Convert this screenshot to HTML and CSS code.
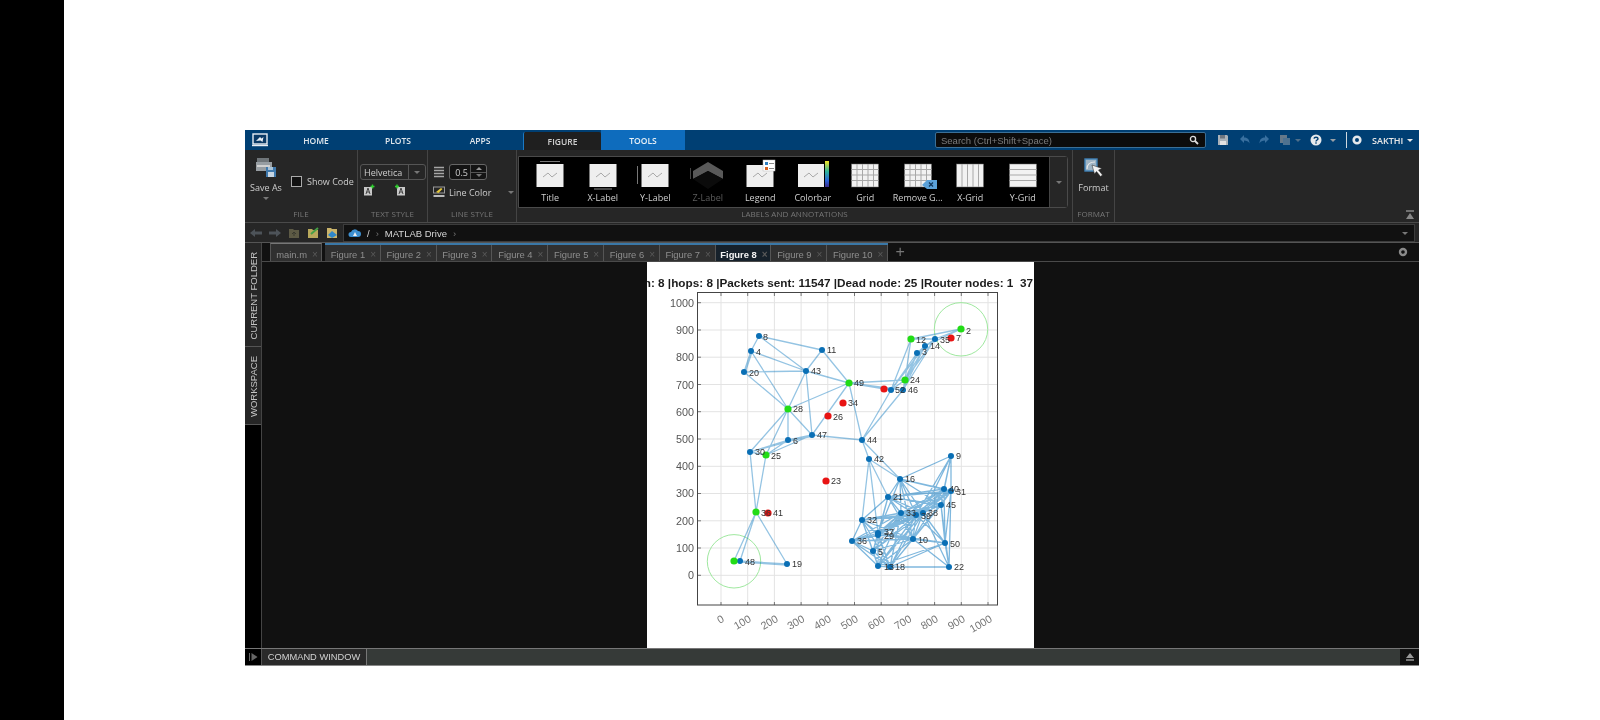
FILE: index.html
```html
<!DOCTYPE html>
<html lang="en">
<head>
<meta charset="utf-8">
<title>MATLAB Online</title>
<link rel="stylesheet" href="styles.css">
</head>
<body class="page">
<div class="blackbar"></div>
<main class="stage">
<div class="app">
  <header class="topbar">
    <div class="logo"><svg width="18" height="14" viewBox="0 0 18 14"><rect x="2" y="1" width="14" height="10" fill="#0b3a66" stroke="#e8eef4" stroke-width="1.4"/><path d="M1 12.5h16" stroke="#e8eef4" stroke-width="1.4"/><path d="M5 8l4-4 1.500 1.500 2-1.500-1 5-2-1.500z" fill="#e8eef4"/></svg></div>
    <div class="navtab">HOME</div>
    <div class="navtab">PLOTS</div>
    <div class="navtab">APPS</div>
    <div class="navtab navtab-figure">FIGURE</div>
    <div class="navtab navtab-tools">TOOLS</div>
    <div class="topfill"></div>
    <div class="search"><span>Search (Ctrl+Shift+Space)</span><svg width="10" height="10" viewBox="0 0 10 10"><circle cx="4" cy="4" r="2.600" fill="none" stroke="#ddd" stroke-width="1.300"/><path d="M6 6l3 3" stroke="#ddd" stroke-width="1.800"/></svg></div>
    <svg class="qa qa-save" width="12" height="12" viewBox="0 0 12 12"><path d="M1 1h9l1 1v9H1z" fill="#aab2b9"/><rect x="3" y="1" width="5" height="3.500" fill="#6d7680"/><rect x="3" y="7" width="6" height="4" fill="#e2e2e2"/></svg>
    <svg class="qa qa-undo" width="12" height="12" viewBox="0 0 12 12"><path d="M1 5l4-4v2.500c3 0 5.500 1.500 5.500 6-1-2.300-3-3-5.500-3V9z" fill="#39709f"/></svg>
    <svg class="qa qa-redo" width="12" height="12" viewBox="0 0 12 12"><path d="M11 5L7 1v2.500c-3 0-5.500 1.500-5.500 6 1-2.300 3-3 5.500-3V9z" fill="#39709f"/></svg>
    <svg class="qa qa-copy" width="12" height="12" viewBox="0 0 12 12"><rect x="1" y="1" width="7" height="8" fill="#66798a"/><rect x="4" y="4" width="7" height="7" fill="#4f7290"/></svg>
    <span class="caret caret-dim qa-c1"></span>
    <svg class="qa qa-help" width="12" height="12" viewBox="0 0 12 12"><circle cx="6" cy="6" r="5.500" fill="#e6e9ec"/><path d="M4 4.600C4.200 2.800 8 2.800 8 4.700 8 6 6 6 6 7.500" fill="none" stroke="#003f73" stroke-width="1.400"/><rect x="5.300" y="8.300" width="1.400" height="1.400" fill="#003f73"/></svg>
    <span class="caret qa-c2"></span>
    <span class="qa-div"></span>
    <svg class="qa qa-gear" width="12" height="12" viewBox="0 0 12 12"><circle cx="6" cy="6" r="3.300" fill="none" stroke="#e6e9ec" stroke-width="2.600"/></svg>
    <span class="username">SAKTHI</span>
    <span class="caret caret-bright qa-c3"></span>
  </header>

  <section class="ribbon">
    <div class="rgroup rg-file">
      <div class="rbody rbody-file">
        <div class="bigbtn">
          <svg width="22" height="22" viewBox="0 0 22 22"><rect x="2" y="1" width="12" height="7" fill="#6f7579"/><rect x="1" y="5" width="16" height="9" fill="#979da2"/><rect x="2" y="8" width="13" height="2" fill="#d0d0d0"/><path d="M11 10h10v10H11z" fill="#3f79ad"/><rect x="13" y="15" width="6" height="5" fill="#c7d6e3"/><rect x="13" y="10" width="5" height="3" fill="#a9c3d8"/></svg>
          <span>Save As</span>
          <span class="caret caret-dim"></span>
        </div>
        <div class="showcode"><span class="check"></span><span>Show Code</span></div>
      </div>
      <div class="rlabel">FILE</div>
    </div>
    <div class="rgroup rg-text">
      <div class="rbody rbody-col">
        <div class="combo"><span class="combo-text">Helvetica</span><span class="combo-btn"><span class="caret caret-dim"></span></span></div>
        <div class="fontbtns">
          <svg width="12" height="12" viewBox="0 0 12 12"><rect x="1" y="3" width="8" height="8.500" fill="#c8c8c8"/><path d="M3 10l2-6 2 6M3.700 8h2.600" fill="none" stroke="#444"/><path d="M9.500 0.500v4M7.500 2.500h4" stroke="#2fd02f" stroke-width="1.400"/></svg>
          <svg width="12" height="12" viewBox="0 0 12 12"><rect x="3" y="3" width="8" height="8.500" fill="#c8c8c8"/><path d="M5 10l2-6 2 6M5.700 8h2.600" fill="none" stroke="#444"/><path d="M3 0.500v4M1 2.500h4" stroke="#2fd02f" stroke-width="1.400"/></svg>
        </div>
      </div>
      <div class="rlabel">TEXT STYLE</div>
    </div>
    <div class="rgroup rg-line">
      <div class="rbody rbody-col">
        <div class="linerow">
          <svg width="12" height="12" viewBox="0 0 12 12"><path d="M1 1.500h10M1 4.500h10M1 7.500h10M1 10.500h10" stroke="#a6a6a6" stroke-width="1.700"/></svg>
          <div class="spinner"><span class="spin-val">0.5</span><span class="spin-btns"><span class="spin-up"></span><span class="spin-down"></span></span></div>
        </div>
        <div class="linerow linerow-color">
          <svg width="12" height="12" viewBox="0 0 12 12"><rect x=".5" y="1" width="11" height="6" fill="none" stroke="#999"/><path d="M3 6l5-4 1.500 1-4 4z" fill="#e6c93c"/><path d="M.5 10h11" stroke="#bbb" stroke-width="2"/></svg>
          <span class="linecolor">Line Color</span>
          <span class="caret caret-dim"></span>
        </div>
      </div>
      <div class="rlabel">LINE STYLE</div>
    </div>
    <div class="rgroup rg-labels">
      <div class="rbody rbody-gallery">
        <div class="gallery">
          <div class="gitem"><svg class="gicon" viewBox="0 0 44 30"><path d="M12 2.500h20" stroke="#777"/><rect x="8.500" y="5" width="27" height="23" fill="#efefef"/><path d="M15 18l5-4 4 4 5-4" fill="none" stroke="#a9a9a9"/></svg><span>Title</span></div>
          <div class="gitem"><svg class="gicon" viewBox="0 0 44 30"><rect x="8.500" y="5" width="27" height="23" fill="#efefef"/><path d="M15 18l5-4 4 4 5-4" fill="none" stroke="#a9a9a9"/><path d="M13 30h18" stroke="#888"/></svg><span>X-Label</span></div>
          <div class="gitem"><svg class="gicon" viewBox="0 0 44 30"><path d="M4.500 7v18" stroke="#777"/><rect x="8.500" y="5" width="27" height="23" fill="#efefef"/><path d="M15 18l5-4 4 4 5-4" fill="none" stroke="#a9a9a9"/></svg><span>Y-Label</span></div>
          <div class="gitem gitem-off"><svg class="gicon" viewBox="0 0 44 30"><path d="M4.500 9v11" stroke="#444"/><path d="M22 3l15 9v8l-15-8-15 8v-8z" fill="#595959"/><path d="M7 20l15 10 15-10-15-8z" fill="#0b0b0b"/></svg><span>Z-Label</span></div>
          <div class="gitem"><svg class="gicon" viewBox="0 0 44 30"><rect x="8.500" y="6" width="27" height="22" fill="#efefef"/><path d="M15 18l5-4 4 4 5-4" fill="none" stroke="#a9a9a9"/><rect x="25" y="1" width="12" height="11" fill="#fff" stroke="#bbb" stroke-width=".5"/><rect x="27" y="3" width="3" height="3" fill="#2f7fc1"/><rect x="27" y="8" width="3" height="3" fill="#d9601e"/><path d="M31 4.500h5M31 9.500h5" stroke="#888"/></svg><span>Legend</span></div>
          <div class="gitem"><svg class="gicon" viewBox="0 0 44 30"><defs><linearGradient id="cbar" x1="0" y1="0" x2="0" y2="1"><stop offset="0" stop-color="#f5e625"/><stop offset=".4" stop-color="#2fb59a"/><stop offset=".75" stop-color="#2a64d8"/><stop offset="1" stop-color="#3a2a8a"/></linearGradient></defs><rect x="7" y="5" width="26" height="23" fill="#efefef"/><path d="M13 18l5-4 4 4 5-4" fill="none" stroke="#a9a9a9"/><rect x="34" y="2" width="4" height="26" fill="url(#cbar)"/></svg><span>Colorbar</span></div>
          <div class="gitem"><svg class="gicon" viewBox="0 0 44 30"><rect x="8.500" y="5" width="27" height="23" fill="#f2f2f2" stroke="#666" stroke-width=".5"/><path d="M14 5v23M19.500 5v23M25 5v23M30.500 5v23M8.500 10.500h27M8.500 16h27M8.500 21.500h27" stroke="#a8a8a8"/></svg><span>Grid</span></div>
          <div class="gitem"><svg class="gicon" viewBox="0 0 44 30"><rect x="8.500" y="5" width="27" height="23" fill="#f2f2f2" stroke="#666" stroke-width=".5"/><path d="M14 5v23M19.500 5v23M25 5v23M30.500 5v23M8.500 10.500h27M8.500 16h27M8.500 21.500h27" stroke="#a8a8a8"/><path d="M26 26l5-5h10v9H31z" fill="#5ba1d8"/><path d="M33 23.500l4 4M37 23.500l-4 4" stroke="#12365a" stroke-width="1.200"/></svg><span>Remove G...</span></div>
          <div class="gitem"><svg class="gicon" viewBox="0 0 44 30"><rect x="8.500" y="5" width="27" height="23" fill="#f2f2f2" stroke="#666" stroke-width=".5"/><path d="M14 5v23M19.500 5v23M25 5v23M30.500 5v23" stroke="#a8a8a8"/></svg><span>X-Grid</span></div>
          <div class="gitem"><svg class="gicon" viewBox="0 0 44 30"><rect x="8.500" y="5" width="27" height="23" fill="#f2f2f2" stroke="#666" stroke-width=".5"/><path d="M8.500 10.500h27M8.500 16h27M8.500 21.500h27" stroke="#a8a8a8"/></svg><span>Y-Grid</span></div>
          <div class="gmore"><span class="caret caret-dim"></span></div>
        </div>
      </div>
      <div class="rlabel">LABELS AND ANNOTATIONS</div>
    </div>
    <div class="rgroup rg-format">
      <div class="rbody rbody-format">
        <svg width="20" height="20" viewBox="0 0 20 20"><rect x="1" y="1" width="12" height="12" fill="#9fb4c4" stroke="#3f82b8" stroke-width="1.400"/><path d="M3 11c0-5 3-7 8-7" fill="none" stroke="#e8e8e8" stroke-width="1.200"/><path d="M8 7l10 3.500-3.500 1.500 4 5-2 1.500-4-5-2 2.500z" fill="#f2f2f2" stroke="#222" stroke-width=".5"/></svg>
        <span>Format</span>
      </div>
      <div class="rlabel">FORMAT</div>
    </div>
    <div class="rfill"><svg width="10" height="10" viewBox="0 0 10 10"><path d="M1 1h8" stroke="#888" stroke-width="1.500"/><path d="M5 3l4 6H1z" fill="#888"/></svg></div>
  </section>

  <nav class="addr">
    <div class="addr-icons">
      <svg width="12" height="10" viewBox="0 0 12 10"><path d="M0 5l5-4v2.500h7v3H5V9z" fill="#4d5359"/></svg>
      <svg width="12" height="10" viewBox="0 0 12 10"><path d="M12 5L7 1v2.500H0v3h7V9z" fill="#4d5359"/></svg>
      <svg width="12" height="10" viewBox="0 0 12 10"><path d="M1 1h4l1 1h5v8H1z" fill="#5d5a45"/><path d="M6 8V4M4 6l2-2 2 2" stroke="#3a3a30" fill="none"/></svg>
      <svg width="12" height="12" viewBox="0 0 12 12"><path d="M1 2h4l1 1h5v8H1z" fill="#b9a95c"/><path d="M4 7l7-6" stroke="#46a046" stroke-width="2"/></svg>
      <svg width="12" height="12" viewBox="0 0 12 12"><path d="M1 1h4l1 1h5v9H1z" fill="#c9b36a"/><path d="M6 4L2 8l4 3 5-3z" fill="#2f86c9"/></svg>
    </div>
    <div class="addr-input">
      <svg width="13" height="9" viewBox="0 0 13 9"><path d="M3 8a2.500 2.500 0 0 1 0-5 4 4 0 0 1 7-1 3 3 0 0 1 0 6z" fill="#3d8fd0"/><path d="M5 7l2-4 2 4z" fill="#f0f0f0"/></svg>
      <span class="crumb-slash">/</span><span class="crumb-sep">›</span><span class="crumb">MATLAB Drive</span><span class="crumb-sep">›</span>
      <span class="addr-fill"></span><span class="caret caret-dim"></span>
    </div>
  </nav>

  <div class="body">
    <aside class="rail">
      <div class="vtab vtab-folder"><span>CURRENT FOLDER</span></div>
      <div class="vtab vtab-work"><span>WORKSPACE</span></div>
    </aside>
    <div class="docs">
      <div class="tabs">
        <div class="grip"></div>
        <div class="tab tab-main">main.m<i>×</i></div>
        <div class="figtabs">
          <div class="tab">Figure 1<i>×</i></div>
          <div class="tab">Figure 2<i>×</i></div>
          <div class="tab">Figure 3<i>×</i></div>
          <div class="tab">Figure 4<i>×</i></div>
          <div class="tab">Figure 5<i>×</i></div>
          <div class="tab">Figure 6<i>×</i></div>
          <div class="tab">Figure 7<i>×</i></div>
          <div class="tab tab-active">Figure 8<i>×</i></div>
          <div class="tab">Figure 9<i>×</i></div>
          <div class="tab tab-wide">Figure 10<i>×</i></div>
        </div>
        <div class="tabplus">+</div>
        <div class="tabsfill"></div>
        <svg width="10" height="10" viewBox="0 0 10 10"><circle cx="5" cy="5" r="3" fill="none" stroke="#8a8a8a" stroke-width="2.400"/></svg>
      </div>
      <div class="figarea">
        <svg class="plot" width="387" height="386" viewBox="647 262 387 386">
          <rect x="647" y="262" width="387" height="386" fill="#fff"/>
          <path class="grid" d="M721 292.500V605M747.700 292.500V605M774.400 292.500V605M801.100 292.500V605M827.800 292.500V605M854.500 292.500V605M881.200 292.500V605M907.900 292.500V605M934.600 292.500V605M961.300 292.500V605M988 292.500V605M697 575.300H997M697 548H997M697 520.800H997M697 493.500H997M697 466.300H997M697 439H997M697 411.700H997M697 384.500H997M697 357.200H997M697 330H997M697 302.700H997"/>
          <rect class="axes" x="697.500" y="292.500" width="300" height="312.500"/>
          <path class="axes-t" d="M721 605v-3M747.700 605v-3M774.400 605v-3M801.100 605v-3M827.800 605v-3M854.500 605v-3M881.200 605v-3M907.900 605v-3M934.600 605v-3M961.300 605v-3M988 605v-3M721 293v3M747.700 293v3M774.400 293v3M801.100 293v3M827.800 293v3M854.500 293v3M881.200 293v3M907.900 293v3M934.600 293v3M961.300 293v3M988 293v3M698 575.300h3M698 548h3M698 520.800h3M698 493.500h3M698 466.300h3M698 439h3M698 411.700h3M698 384.500h3M698 357.200h3M698 330h3M698 302.700h3"/>
          <text class="title" x="1033" y="287" text-anchor="end">n: 8 |hops: 8 |Packets sent: 11547 |Dead node: 25 |Router nodes: 1  37</text>
          <g class="ylab">
            <text x="694" y="579">0</text><text x="694" y="552">100</text><text x="694" y="525">200</text><text x="694" y="497">300</text><text x="694" y="470">400</text><text x="694" y="443">500</text><text x="694" y="416">600</text><text x="694" y="388.500">700</text><text x="694" y="361">800</text><text x="694" y="334">900</text><text x="694" y="307">1000</text>
          </g>
          <g class="xlab">
            <text transform="translate(725 621) rotate(-30)">0</text><text transform="translate(752 621) rotate(-30)">100</text><text transform="translate(779 621) rotate(-30)">200</text><text transform="translate(805.500 621) rotate(-30)">300</text><text transform="translate(832 621) rotate(-30)">400</text><text transform="translate(859 621) rotate(-30)">500</text><text transform="translate(886 621) rotate(-30)">600</text><text transform="translate(912.500 621) rotate(-30)">700</text><text transform="translate(939 621) rotate(-30)">800</text><text transform="translate(966 621) rotate(-30)">900</text><text transform="translate(993 621) rotate(-30)">1000</text>
          </g>
          <circle class="range" cx="961" cy="329.300" r="26.700"/>
          <circle class="range" cx="734" cy="561.300" r="26.700"/>
          <path class="edges" d="M759 336L751 351M759 336L806 371M759 336L822 350M751 351L744 372M752 352L745 373M751 351L806 371M751 351L788 409M744 372L806 371M744 372L788 409M822 350L806 371M822 350L849 383M806 371L849 383M806 371L788 409M806 371L812 435M788 409L849 383M788 409L812 435M788 409L788 440M788 409L750 452M788 409L766 455M788 440L812 435M789 441L813 436M788 440L750 452M788 440L766 455M812 435L766 455M812 435L750 452M812 435L862 440M812 435L849 383M750 452L766 455M750 452L756 512M766 455L756 512M756 512L734 561M756 512L740 561M756 512L787 564M740 561L787 564M740 562L787 565M734 561L740 561M849 383L862 440M849 383L905 380M849 383L891 390M849 383L903 390M862 440L869 459M862 440L891 390M862 440L903 390M905 380L911 339M905 380L917 353M905 380L925 346M905 380L935 339M903 390L905 380M891 390L905 380M891 390L911 339M891 390L917 353M891 390L925 346M903 390L917 353M903 390L925 346M903 390L935 339M911 339L961 329M911 339L935 339M935 339L961 329M925 346L961 329M917 353L935 339M917 353L925 346M925 346L935 339M869 459L900 479M862 440L900 479M869 459L888 497M869 459L862 520M869 459L878 533"/>
          <path class="edges edges-dense" d="M900 479L951 456M900 479L944 489M900 479L951 491M900 479L941 505M900 479L888 497M900 479L901 513M900 479L916 515M900 479L923 513M900 479L878 533M900 479L913 539M951 456L944 489M951 456L951 491M951 456L941 505M951 456L923 513M951 456L916 515M944 489L951 491M944 489L941 505M944 489L888 497M944 489L901 513M944 489L916 515M944 489L923 513M944 489L878 533M944 489L913 539M944 489L945 543M944 489L878 535M951 491L941 505M951 491L888 497M951 491L901 513M951 491L916 515M951 491L923 513M951 491L913 539M951 491L945 543M951 491L949 567M951 491L878 535M941 505L901 513M941 505L916 515M941 505L923 513M941 505L913 539M941 505L945 543M941 505L949 567M941 505L888 497M888 497L901 513M888 497L916 515M888 497L923 513M888 497L862 520M888 497L878 533M888 497L878 535M888 497L913 539M888 497L873 551M901 513L916 515M901 513L923 513M901 513L862 520M901 513L878 533M901 513L878 535M901 513L913 539M901 513L852 541M901 513L873 551M901 513L878 566M901 513L890 567M916 515L923 513M916 515L862 520M916 515L878 533M916 515L878 535M916 515L913 539M916 515L945 543M916 515L852 541M916 515L873 551M916 515L878 566M916 515L890 567M923 513L878 533M923 513L878 535M923 513L913 539M923 513L945 543M923 513L873 551M923 513L878 566M923 513L890 567M923 513L949 567M923 513L862 520M862 520L878 533M862 520L878 535M862 520L852 541M862 520L873 551M862 520L878 566M862 520L890 567M862 520L913 539M878 533L878 535M878 533L852 541M878 533L873 551M878 533L878 566M878 533L890 567M878 533L913 539M878 533L945 543M878 535L852 541M878 535L873 551M878 535L878 566M878 535L890 567M878 535L913 539M878 535L945 543M913 539L945 543M913 539L873 551M913 539L878 566M913 539L890 567M913 539L852 541M913 539L949 567M852 541L873 551M852 541L878 566M852 541L890 567M873 551L878 566M873 551L890 567M878 566L890 567M890 567L949 567M890 567L945 543M878 566L945 543M945 543L949 567"/>
          <g class="dots">
            <circle cx="759" cy="336" r="3"/><circle cx="751" cy="351" r="3"/><circle cx="744" cy="372" r="3"/><circle cx="822" cy="350" r="3"/><circle cx="806" cy="371" r="3"/><circle cx="812" cy="435" r="3"/><circle cx="788" cy="440" r="3"/><circle cx="750" cy="452" r="3"/><circle cx="862" cy="440" r="3"/><circle cx="869" cy="459" r="3"/><circle cx="935" cy="339" r="3"/><circle cx="925" cy="346" r="3"/><circle cx="917" cy="353" r="3"/><circle cx="891" cy="390" r="3"/><circle cx="903" cy="390" r="3"/><circle cx="740" cy="561" r="3"/><circle cx="787" cy="564" r="3"/><circle cx="900" cy="479" r="3"/><circle cx="951" cy="456" r="3"/><circle cx="944" cy="489" r="3"/><circle cx="951" cy="491" r="3"/><circle cx="941" cy="505" r="3"/><circle cx="888" cy="497" r="3"/><circle cx="901" cy="513" r="3"/><circle cx="916" cy="515" r="3"/><circle cx="923" cy="513" r="3"/><circle cx="862" cy="520" r="3"/><circle cx="878" cy="533" r="3"/><circle cx="878" cy="535" r="3"/><circle cx="913" cy="539" r="3"/><circle cx="852" cy="541" r="3"/><circle cx="945" cy="543" r="3"/><circle cx="873" cy="551" r="3"/><circle cx="878" cy="566" r="3"/><circle cx="890" cy="567" r="3"/><circle cx="949" cy="567" r="3"/>
          </g>
          <g class="dots-green">
            <circle cx="788" cy="409" r="3.600"/><circle cx="766" cy="455" r="3.600"/><circle cx="849" cy="383" r="3.600"/><circle cx="905" cy="380" r="3.600"/><circle cx="911" cy="339" r="3.600"/><circle cx="961" cy="329" r="3.600"/><circle cx="756" cy="512" r="3.600"/><circle cx="734" cy="561" r="3.600"/>
          </g>
          <g class="dots-red">
            <circle cx="828" cy="416" r="3.600"/><circle cx="843" cy="403" r="3.600"/><circle cx="884" cy="389" r="3.600"/><circle cx="951" cy="338" r="3.600"/><circle cx="768" cy="513" r="3.600"/><circle cx="826" cy="481" r="3.600"/>
          </g>
          <g class="nlab">
            <text x="763" y="340">8</text><text x="756" y="355">4</text><text x="749" y="376">20</text><text x="827" y="353">11</text><text x="811" y="374">43</text><text x="793" y="412">28</text><text x="833" y="420">26</text><text x="817" y="438">47</text><text x="793" y="444">6</text><text x="755" y="455">30</text><text x="771" y="459">25</text>
            <text x="966" y="334">2</text><text x="956" y="341">7</text><text x="940" y="343">35</text><text x="916" y="343">12</text><text x="930" y="349">14</text><text x="922" y="355">3</text><text x="910" y="383">24</text><text x="854" y="386">49</text><text x="895" y="393">52</text><text x="908" y="393">46</text><text x="848" y="406">34</text><text x="867" y="443">44</text><text x="874" y="462">42</text><text x="956" y="459">9</text>
            <text x="761" y="516">36</text><text x="773" y="516">41</text><text x="831" y="484">23</text><text x="745" y="565">48</text><text x="792" y="567">19</text>
            <text x="905" y="482">16</text><text x="949" y="492">40</text><text x="956" y="495">31</text><text x="946" y="508">45</text><text x="893" y="500">21</text><text x="906" y="516">33</text><text x="921" y="519">39</text><text x="928" y="516">38</text><text x="867" y="523">32</text><text x="884" y="535">37</text><text x="884" y="539">29</text><text x="918" y="543">10</text><text x="857" y="544">36</text><text x="950" y="547">50</text><text x="878" y="555">5</text><text x="884" y="570">13</text><text x="895" y="570">18</text><text x="954" y="570">22</text>
          </g>
        </svg>
      </div>
    </div>
  </div>

  <footer class="cmd">
    <div class="cmd-left"><svg width="9" height="10" viewBox="0 0 9 10"><path d="M.5 1v8" stroke="#666"/><path d="M2.500 1l6 4-6 4z" fill="#666"/></svg></div>
    <div class="cmd-tab">COMMAND WINDOW</div>
    <div class="cmd-fill"></div>
    <div class="cmd-right"><svg width="10" height="10" viewBox="0 0 10 10"><path d="M5 1l4 5H1z" fill="#999"/><path d="M1 8h8" stroke="#999" stroke-width="1.500"/></svg></div>
  </footer>
</div>
</main>
</body>
</html>
```
FILE: styles.css
```css
* { box-sizing: border-box; }
html, body { margin: 0; padding: 0; }
.page { display: flex; width: 1600px; height: 720px; overflow: hidden; background: #fff; font-family: "Open Sans", "Liberation Sans", sans-serif; }
.blackbar { width: 64px; flex: none; background: #000; }
.stage { flex: 1; padding: 130px 0 0 181px; }
.app { width: 1174px; height: 536px; display: flex; flex-direction: column; background: #111; filter: blur(.45px); }

.caret { display: inline-block; width: 0; height: 0; border-left: 3px solid transparent; border-right: 3px solid transparent; border-top: 3px solid #9aa0a5; flex: none; }
.caret-dim { border-top-color: #777; }
.caret-bright { border-top-color: #e8e8e8; }

.topbar { height: 20px; flex: none; display: flex; align-items: stretch; background: #003f73; }
.logo { width: 30px; display: flex; align-items: center; justify-content: center; }
.navtab { width: 82px; display: flex; align-items: center; justify-content: center; font-size: 8.500px; font-weight: 600; color: #dfe6ec; }
.navtab-figure { width: 78px; margin-left: 2px; background: #1f1f1f; color: #cfcfcf; border-left: 1px solid #1b79c4; border-radius: 2px 2px 0 0; margin-top: 2px; }
.navtab-tools { width: 84px; background: #0e6cbd; color: #e8f0f6; }
.topfill { width: 250px; }
.search { width: 271px; margin: 2px 0; display: flex; align-items: center; justify-content: space-between; padding: 0 6px 0 5px; background: #0c0c0c; border: 1px solid #3b6f96; border-radius: 2px; font-family: "Liberation Sans", sans-serif; font-size: 9.500px; color: #7c7c7c; }
.qa { align-self: center; flex: none; }
.qa-save { margin-left: 11px; }
.qa-undo { margin-left: 10px; }
.qa-redo { margin-left: 7px; }
.qa-copy { margin-left: 9px; }
.qa-c1 { align-self: center; margin-left: 4px; border-top-color: #4f6f8a; }
.qa-help { margin-left: 9px; }
.qa-c2 { align-self: center; margin-left: 8px; }
.qa-div { width: 1px; margin: 2px 0 2px 10px; background: #cfd8df; }
.qa-gear { margin-left: 4px; }
.username { align-self: center; margin-left: 9px; width: 31px; font-size: 9px; font-weight: 600; color: #e8e8e8; white-space: nowrap; }
.qa-c3 { align-self: center; margin-left: 4px; }

.ribbon { height: 73px; flex: none; display: flex; background: #262626; border-bottom: 1px solid #4a4a4a; }
.rgroup { display: flex; flex-direction: column; border-right: 1px solid #444; }
.rg-file { width: 113px; }
.rg-text { width: 70px; }
.rg-line { width: 89px; }
.rg-labels { width: 556px; }
.rg-format { width: 42px; }
.rfill { flex: 1; display: flex; align-items: flex-end; justify-content: flex-end; padding: 0 4px 2px 0; }
.rbody { flex: 1; min-height: 0; font-size: 9px; color: #cdcdcd; }
.rlabel { height: 15px; line-height: 14px; text-align: center; font-size: 8px; color: #777; letter-spacing: .1px; }
.rbody-file { display: flex; align-items: flex-start; padding: 7px 0 0 3px; }
.bigbtn { width: 36px; display: flex; flex-direction: column; align-items: center; gap: 3px; }
.bigbtn span:nth-child(2) { line-height: 12px; white-space: nowrap; }
.showcode { display: flex; align-items: center; gap: 5px; margin: 18px 0 0 7px; white-space: nowrap; }
.check { width: 11px; height: 11px; border: 1px solid #aaa; background: #111; }
.rbody-col { display: flex; flex-direction: column; padding: 14px 0 0 2px; }
.combo { width: 66px; height: 16px; display: flex; border: 1px solid #555; border-radius: 3px; }
.combo-text { flex: 1; padding-left: 3px; line-height: 15px; }
.combo-btn { width: 17px; display: flex; align-items: center; justify-content: center; border-left: 1px solid #555; }
.fontbtns { display: flex; gap: 19px; padding: 4px 0 0 3px; }
.linerow { display: flex; align-items: center; gap: 4px; padding-left: 3px; }
.spinner { width: 38px; height: 16px; display: flex; border: 1px solid #666; border-radius: 3px; background: #141414; }
.spin-val { flex: 1; text-align: right; padding-right: 2px; line-height: 15px; }
.spin-btns { width: 16px; display: flex; flex-direction: column; border-left: 1px solid #555; }
.spin-up, .spin-down { flex: 1; display: flex; align-items: center; justify-content: center; }
.spin-up { border-bottom: 1px solid #555; }
.spin-up::after { content: ""; border-left: 3px solid transparent; border-right: 3px solid transparent; border-bottom: 3px solid #999; }
.spin-down::after { content: ""; border-left: 3px solid transparent; border-right: 3px solid transparent; border-top: 3px solid #777; }
.linerow-color { margin-top: 4px; }
.linecolor { white-space: nowrap; line-height: 14px; margin-right: 13px; padding-top: 2px; }
.rbody-gallery { padding: 6px 0 0 1px; }
.gallery { width: 550px; height: 52px; display: flex; padding: 2px 0 0 5px; background: #000; border: 1px solid #4a4a4a; border-radius: 0 3px 3px 0; }
.gitem { width: 52.500px; flex: none; display: flex; flex-direction: column; align-items: center; color: #cfcfcf; white-space: nowrap; }
.gitem span { line-height: 12px; margin-top: 3px; }
.gitem-off { color: #5c5c5c; }
.gicon { width: 44px; height: 30px; display: block; overflow: visible; }
.gmore { flex: 1; display: flex; align-items: center; justify-content: center; margin-top: -2px; border-left: 1px solid #444; background: #262626; }
.rbody-format { display: flex; flex-direction: column; align-items: center; padding-top: 8px; gap: 3px; }

.addr { height: 20px; flex: none; display: flex; align-items: center; background: #262626; border-bottom: 1px solid #555; }
.addr-icons { width: 98px; display: flex; align-items: center; gap: 7px; padding-left: 5px; }
.addr-input { flex: 1; height: 18px; margin-right: 4px; display: flex; align-items: center; gap: 6px; padding: 1px 6px 0 4px; background: #111; border: 1px solid #3c3c3c; font-family: "Liberation Sans", sans-serif; font-size: 9.500px; color: #d8d8d8; }
.crumb-slash { color: #ddd; }
.crumb-sep { color: #777; }
.addr-fill { flex: 1; }

.body { flex: 1; min-height: 0; display: flex; }
.rail { width: 17px; flex: none; display: flex; flex-direction: column; background: #000; border-right: 1px solid #444; }
.vtab { display: flex; align-items: center; justify-content: center; background: #262626; border-bottom: 1px solid #555; }
.vtab span { writing-mode: vertical-rl; transform: rotate(180deg); font-family: "Liberation Sans", sans-serif; font-size: 9.500px; color: #c4c4c4; white-space: nowrap; }
.vtab-folder { height: 104px; padding-top: 2px; }
.vtab-work { height: 78px; padding-top: 2px; }
.docs { flex: 1; min-width: 0; display: flex; flex-direction: column; }
.tabs { height: 19px; flex: none; display: flex; align-items: stretch; padding-right: 11px; background: #111; border-bottom: 1px solid #4a4a4a; font-family: "Liberation Sans", sans-serif; font-size: 9.400px; color: #8e8e8e; }
.tabs > svg { align-self: center; }
.grip { width: 8px; }
.tab { width: 55.800px; flex: none; display: flex; align-items: center; justify-content: center; gap: 5px; padding: 3px 0 0 2px; background: #303030; border-right: 1px solid #555; white-space: nowrap; }
.tab i { font-style: normal; color: #5a5a5a; font-size: 10px; }
.tab-main { width: 52px; margin-right: 3px; border-top: 1px solid #777; border-left: 1px solid #555; }
.figtabs { display: flex; border-top: 2px solid #3a78a8; }
.tab-active { background: #16212b; color: #f2f2f2; font-weight: 700; }
.tab-wide { width: 61px; }
.tabplus { width: 24px; text-align: center; font-size: 16px; line-height: 18px; color: #777; }
.tabsfill { flex: 1; }
.figarea { flex: 1; min-height: 0; display: flex; justify-content: center; background: #111; }
.plot { display: block; overflow: hidden; font-family: "Liberation Sans", sans-serif; }
.grid { stroke: #e3e3e3; stroke-width: 1; fill: none; }
.axes { fill: none; stroke: #444; stroke-width: 1; }
.axes-t { fill: none; stroke: #444; stroke-width: .7; }
.title { font-size: 11.750px; font-weight: 700; fill: #1c1c1c; white-space: pre; }
.ylab text { font-size: 10.800px; fill: #555; text-anchor: end; }
.xlab text { font-size: 10.800px; fill: #777; text-anchor: end; }
.range { fill: none; stroke: #9fe89f; stroke-width: 1; }
.edges { fill: none; stroke: #0072bd; stroke-opacity: .42; stroke-width: 1.300; }
.edges-dense { stroke-opacity: .5; }
.dots circle { fill: #0a6fb5; }
.dots-green circle { fill: #22dc16; }
.dots-red circle { fill: #e81414; }
.nlab text { font-size: 9px; fill: #333; }

.cmd { height: 18px; flex: none; display: flex; align-items: stretch; background: #363a38; border-bottom: 1px solid #888; border-top: 1px solid #777; }
.cmd-left { width: 17px; display: flex; align-items: center; justify-content: center; background: #000; border-right: 1px solid #555; }
.cmd-tab { width: 105px; display: flex; align-items: center; justify-content: center; background: #2a2a2a; border-right: 1px solid #777; font-family: "Liberation Sans", sans-serif; font-size: 9.300px; color: #d2d2d2; white-space: nowrap; }
.cmd-fill { flex: 1; }
.cmd-right { width: 19px; display: flex; align-items: center; justify-content: center; background: #111; }
```
